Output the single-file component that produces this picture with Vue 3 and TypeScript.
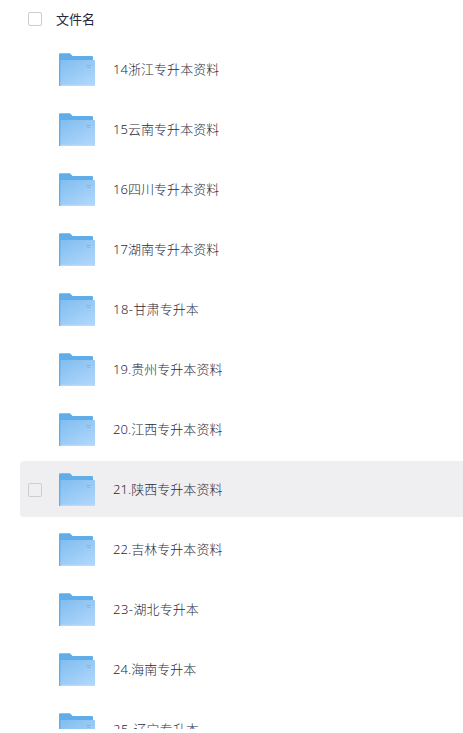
<script setup lang="ts">
import { ref } from 'vue'

interface Folder {
  index: string
  name: string
  active?: boolean
}

const folders = ref<Folder[]>([
  { index: '14', name: '浙江专升本资料' },
  { index: '15', name: '云南专升本资料' },
  { index: '16', name: '四川专升本资料' },
  { index: '17', name: '湖南专升本资料' },
  { index: '18-', name: '甘肃专升本' },
  { index: '19.', name: '贵州专升本资料' },
  { index: '20.', name: '江西专升本资料' },
  { index: '21.', name: '陕西专升本资料', active: true },
  { index: '22.', name: '吉林专升本资料' },
  { index: '23-', name: '湖北专升本' },
  { index: '24.', name: '海南专升本' },
  { index: '25-', name: '辽宁专升本' },
])
</script>

<template>
  <main class="file-list">
    <header class="head">
      <span class="checkbox"></span>
      <span class="title">文件名</span>
    </header>
    <ul class="rows">
      <li v-for="folder in folders" :key="folder.index" class="row" :class="{ active: folder.active }">
        <span class="checkbox" :class="{ hidden: !folder.active }"></span>
        <svg class="icon" width="36" height="34" viewBox="0 0 36 34">
          <defs>
            <linearGradient id="front" x1="0" y1="0" x2="0.7" y2="1">
              <stop offset="0" stop-color="#80bdf0" />
              <stop offset="1" stop-color="#add5fa" />
            </linearGradient>
          </defs>
          <path d="M0 33V1.5Q0 .3 1.2 .3H10.2Q11.3 .3 12 1.2L13.5 3H32.8Q34 3 34 4.2V33Z" fill="#60ade7" />
          <path d="M1.5 7H35.2Q36 7 36 7.8V32.2Q36 33 35.2 33H1.2Z" fill="url(#front)" />
          <path d="M2 32.3H35.5" stroke="#bfdcfb" stroke-width="1" />
          <path d="M27 12.5H32M28 14.5H31" stroke="#6fb1ea" stroke-width=".7" />
        </svg>
        <span class="name"><span :class="{ dashed: folder.index.endsWith('-') }">{{ folder.index }}</span>{{ folder.name }}</span>
      </li>
    </ul>
  </main>
</template>

<style>
body {
  background: #fff;
}
</style>

<style scoped>
.file-list {
  box-sizing: border-box;
  height: 729px;
  padding-left: 20px;
  overflow: hidden;
  font-family: "Noto Sans", "Noto Sans CJK SC", sans-serif;
  font-size: 13px;
  line-height: 20px;
  color: #29293c;
}

.head {
  display: flex;
  align-items: center;
  height: 38px;
  padding-left: 8px;
  margin-bottom: 3px;
  color: #25263a;
}

.title {
  margin-left: 14px;
}

.rows {
  display: flex;
  flex-direction: column;
  gap: 4px;
  margin: 0;
  padding: 0;
  list-style: none;
}

.row {
  display: flex;
  flex: none;
  align-items: center;
  box-sizing: border-box;
  height: 56px;
  padding-left: 8px;
  border-radius: 4px 0 0 4px;
}

.row.active {
  background: #efeff1;
}

.checkbox {
  box-sizing: border-box;
  flex: none;
  width: 14px;
  height: 14px;
  border: 1px solid #cdcdd0;
  border-radius: 2px;
}

.row .checkbox {
  margin-top: 2px;
}

.hidden {
  visibility: hidden;
}

.icon {
  flex: none;
  margin-left: 17px;
  margin-top: 1px;
}

.name {
  margin-left: 18px;
  font-weight: 300;
  letter-spacing: 0.05px;
  white-space: nowrap;
}

.dashed {
  letter-spacing: 0.5px;
}
</style>
